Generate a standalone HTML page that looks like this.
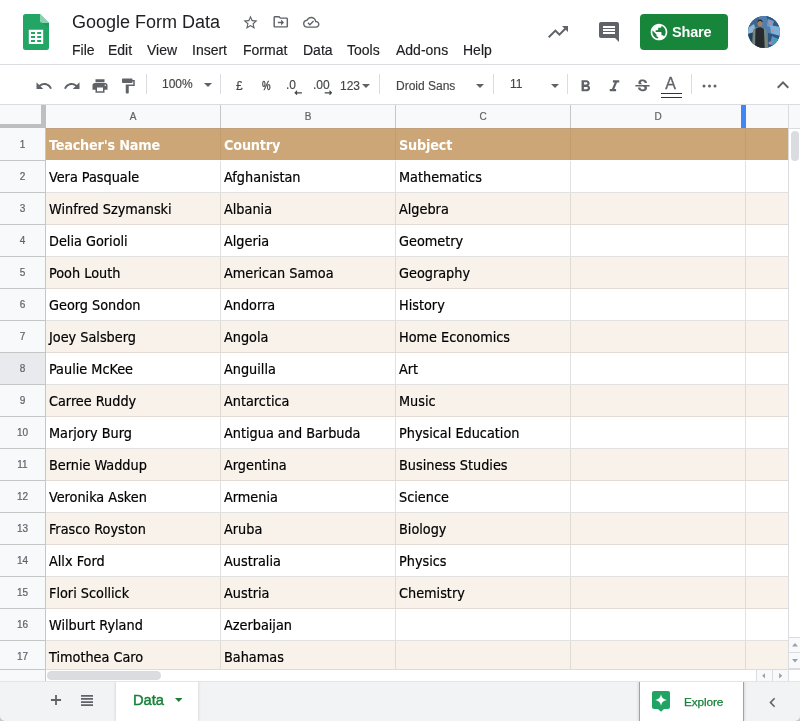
<!DOCTYPE html>
<html><head><meta charset="utf-8"><title>Google Form Data</title>
<style>
*{box-sizing:border-box;margin:0;padding:0}
html,body{width:800px;height:721px;overflow:hidden;background:#fff;font-family:"Liberation Sans",sans-serif;color:#202124}
svg{position:absolute;display:block}
#titlebar{will-change:transform;position:absolute;left:0;top:0;width:800px;height:65px;background:#fff;border-bottom:1px solid #dadce0}
#title{position:absolute;left:72px;top:10px;font-size:18px;color:#202124;white-space:nowrap;line-height:24px}
#menu{position:absolute;left:0;top:40px;height:20px;font-size:14px;line-height:20px;color:#202124;white-space:nowrap;-webkit-text-stroke:.150px #202124}
#menu span{position:absolute;top:0}
#share{position:absolute;left:640px;top:14px;width:88px;height:36px;border-radius:4px;background:#17853a}
#share b{position:absolute;left:32px;top:9px;font-size:14.5px;line-height:18px;color:#fff;font-weight:bold;letter-spacing:-.2px}
#avatar{position:absolute;left:748px;top:16px;width:32px;height:32px;border-radius:50%;overflow:hidden;background:#4f7faf}
#toolbar{will-change:transform;position:absolute;left:0;top:65px;width:800px;height:40px;background:#fff;border-bottom:1px solid #dadce0}
.tsep{position:absolute;top:9px;width:1px;height:20px;background:#dadce0}
.tt{position:absolute;font-size:12px;color:#444746;-webkit-text-stroke:.150px #444746;line-height:16px;white-space:nowrap}
.caret{position:absolute;width:0;height:0;border-left:4px solid transparent;border-right:4px solid transparent;border-top:4px solid #5f6368}
#grid{will-change:transform;position:absolute;left:0;top:105px;width:800px;height:576px;background:#fff;overflow:hidden}
#colhdr{position:absolute;left:0;top:0;width:789px;height:23px;background:#f8f9fa}
.ch{position:absolute;top:0;height:23px;border-right:1px solid #c4c7c5;font-size:10px;line-height:24px;text-align:center;color:#5f6368;-webkit-text-stroke:.200px #5f6368}
#corner{position:absolute;left:0;top:0;width:46px;height:24px;background:#f8f9fa}
#cornerv{position:absolute;left:41px;top:0;width:5px;height:24px;background:#bdbfc1}
#cornerh{position:absolute;left:0;top:19px;width:46px;height:5px;background:#bdbfc1}
#bluebar{position:absolute;left:741px;top:0;width:5px;height:24px;background:#4285f4}
.rh{position:absolute;left:0;width:46px;height:32px;background:#f8f9fa;border-right:1px solid #c4c7c5;border-bottom:1px solid #c4c7c5;font-size:10px;line-height:32px;text-align:center;color:#5f6368;-webkit-text-stroke:.200px #5f6368}
.row{position:absolute;left:46px;width:742px;height:32px;border-bottom:1px solid #e1e1e1}
.row.alt{background:#f8f2eb}
.row.hd{background:#cca677;color:#fff;font-weight:bold;border-bottom:none;border-top:1px solid #bfa07a}
.c{position:absolute;top:0;height:31px;border-right:1px solid #e1e1e1;font-family:"DejaVu Sans Condensed","DejaVu Sans","Liberation Sans",sans-serif;font-size:14.3px;line-height:31px;padding-top:1px;padding-left:3px;white-space:nowrap;overflow:hidden;color:#000;-webkit-text-stroke:.200px #000}
.row.hd .c{padding-top:1px;height:31px;color:#fff;-webkit-text-stroke:0;border-right-color:#c19c6e;letter-spacing:-.2px}
.row.alt .c{border-right-color:#e0dbd5}
.row.alt{border-bottom-color:#e0dbd5}
#bottombar{will-change:transform;position:absolute;left:0;top:681px;width:800px;height:40px;background:#f1f3f4;overflow:hidden}
#tab{position:absolute;left:116px;top:0;width:82px;height:40px;background:#fff;box-shadow:0 0 3px rgba(60,64,67,.220)}
#tab b{position:absolute;left:17px;top:10px;font-size:14.700px;line-height:18px;color:#188038;font-weight:normal;-webkit-text-stroke:.450px #188038}
#explore{position:absolute;left:639px;top:0;width:105px;height:40px;background:#fff;border-left:1px solid #a0a3a6;border-right:1px solid #a0a3a6;box-shadow:0 0 3px rgba(60,64,67,.250)}
#explore span{position:absolute;left:44px;top:13px;font-size:11.800px;line-height:16px;color:#188038;-webkit-text-stroke:.250px #188038;letter-spacing:-.100px}

</style></head><body>
<div id="titlebar">
<svg style="left:23px;top:14px" width="26" height="36" viewBox="0 0 26 36"><path d="M2.500 0H17l9 9v24.500a2.500 2.500 0 0 1-2.500 2.500h-21A2.500 2.500 0 0 1 0 33.500V2.500A2.500 2.500 0 0 1 2.500 0z" fill="#23a566"/><path d="M17 0l9 9h-6.500A2.500 2.500 0 0 1 17 6.500z" fill="#8ed1b1"/><path d="M18 8.500L26 14V9h-6.500z" fill="#1c8f58" opacity=".450"/><path d="M5.800 15.800h14.400v14.200H5.800zM8 18.100v1.900h4v-1.900zm6.200 0v1.900h4v-1.900zM8 22.100v2h4v-2zm6.200 0v2h4v-2zM8 26.100v1.900h4v-1.900zm6.200 0v1.900h4v-1.900z" fill="#fff" fill-rule="evenodd"/></svg>
<div id="title">Google Form Data</div>
<svg style="left:242.300px;top:14.100px" width="17" height="17" viewBox="0 0 24 24"><path fill="#5f6368" d="M22 9.240l-7.190-.620L12 2 9.190 8.630 2 9.240l5.460 4.730L5.820 21 12 17.270 18.180 21l-1.630-7.030L22 9.240zM12 15.400l-3.760 2.270 1-4.280-3.320-2.880 4.380-.380L12 6.100l1.710 4.040 4.380.380-3.320 2.880 1 4.280L12 15.400z"/></svg>
<svg style="left:271.500px;top:13.300px" width="17.500" height="17.500" viewBox="0 0 24 24"><path fill="#5f6368" d="M20 6h-8l-2-2H4c-1.100 0-2 .900-2 2v12c0 1.100.900 2 2 2h16c1.100 0 2-.900 2-2V8c0-1.100-.900-2-2-2zm0 12H4V6h5.170l2 2H20v10zm-7.500-1l4-4-4-4v3H8v2h4.500v3z"/></svg>
<svg style="left:303px;top:14.200px" width="16.500" height="16.500" viewBox="0 0 24 24"><path fill="#5f6368" d="M19.350 10.040C18.670 6.590 15.640 4 12 4 9.110 4 6.600 5.640 5.350 8.040 2.340 8.360 0 10.910 0 14c0 3.310 2.690 6 6 6h13c2.760 0 5-2.240 5-5 0-2.640-2.050-4.780-4.650-4.960zM19 18H6c-2.210 0-4-1.790-4-4 0-2.050 1.530-3.760 3.560-3.970l1.070-.110.500-.950C8.080 7.140 9.940 6 12 6c2.620 0 4.880 1.860 5.390 4.430l.300 1.500 1.530.110c1.560.100 2.780 1.410 2.780 2.960 0 1.650-1.350 3-3 3zm-9-3.820l-2.090-2.090L6.500 13.500 10 17l6.010-6.010-1.410-1.410z"/></svg>
<div id="menu"><span style="left:72px">File</span><span style="left:108px">Edit</span><span style="left:147px">View</span><span style="left:192px">Insert</span><span style="left:243px">Format</span><span style="left:303px">Data</span><span style="left:347px">Tools</span><span style="left:396px">Add-ons</span><span style="left:463px">Help</span></div>
<svg style="left:546px;top:20px" width="24" height="24" viewBox="0 0 24 24"><path fill="#5f6368" d="M16 6l2.290 2.290-4.880 4.880-4-4L2 16.590 3.410 18l6-6 4 4 6.300-6.290L22 12V6z"/></svg>
<svg style="left:597px;top:20px" width="24" height="24" viewBox="0 0 24 24"><path fill="#5f6368" d="M21.990 4c0-1.100-.890-2-1.990-2H4c-1.100 0-2 .900-2 2v12c0 1.100.900 2 2 2h14l4 4-.010-18zM18 14H6v-2h12v2zm0-3H6V9h12v2zm0-3H6V6h12v2z"/></svg>
<div id="share"><svg style="left:9px;top:8px" width="20" height="20" viewBox="0 0 24 24"><path fill="#fff" d="M12 2C6.480 2 2 6.480 2 12s4.480 10 10 10 10-4.480 10-10S17.520 2 12 2zm-1 17.930c-3.950-.490-7-3.850-7-7.930 0-.620.080-1.210.210-1.790L9 15v1c0 1.100.900 2 2 2v1.930zm6.900-2.540c-.260-.810-1-1.390-1.900-1.390h-1v-3c0-.550-.450-1-1-1H8v-2h2c.550 0 1-.450 1-1V7h2c1.100 0 2-.900 2-2v-.410c2.930 1.190 5 4.060 5 7.410 0 2.080-.800 3.970-2.100 5.390z"/></svg><b>Share</b></div>
<div id="avatar"><svg style="left:0;top:0" width="32" height="32" viewBox="0 0 32 32"><rect width="32" height="32" fill="#4f7faf"/><path d="M0 0h11v14L0 20z" fill="#3b6690"/><path d="M0 12l6-4 3 10-9 6z" fill="#8fb6d6"/><path d="M18 0h14v10l-8 3z" fill="#35597f"/><path d="M20 3l6 2-2 7-5-2z" fill="#6f9cc8"/><path d="M22 9l10 2v9l-9-3z" fill="#7fb0da"/><path d="M20 17l12 3v12H20z" fill="#2f5680"/><path d="M24 20l6 3-3 8-5-3z" fill="#5a93c4"/><circle cx="22" cy="7" r="1.500" fill="#c9859a"/><circle cx="25" cy="15" r="1.300" fill="#d08a8f"/><circle cx="22" cy="27" r="1.500" fill="#b9808f"/><circle cx="28" cy="24" r="2" fill="#3fa0b8"/><path d="M0 18l6-2v16H0z" fill="#27405e"/><path d="M5 14c1.500-2.500 4-3.500 6.500-3.500S16.500 12 18 14l2 18H4z" fill="#78857b"/><path d="M7.500 13c1.200-1.200 2.600-1.700 4.200-1.700s3 .5 4.200 1.700l.8 19H7z" fill="#272b30"/><ellipse cx="12" cy="7.600" rx="2.500" ry="3" fill="#a87d66"/><path d="M9.400 6.800c0-2.300 1.200-3.400 2.700-3.400s2.600 1.100 2.600 3.200c-.8-1.200-1.700-1.700-2.700-1.700s-1.800.600-2.600 1.900z" fill="#2a2420"/></svg></div>
</div>
<div id="toolbar">
<svg style="left:35px;top:11.700px" width="18" height="18" viewBox="0 0 24 24"><path fill="#5f6368" d="M12.500 8c-2.650 0-5.050.990-6.900 2.600L2 7v9h9l-3.620-3.620c1.390-1.160 3.160-1.880 5.120-1.880 3.540 0 6.550 2.310 7.600 5.500l2.370-.780C21.080 11.030 17.150 8 12.500 8z"/></svg>
<svg style="left:63px;top:11.700px" width="18" height="18" viewBox="0 0 24 24"><path fill="#5f6368" d="M18.400 10.600C16.550 8.990 14.150 8 11.500 8c-4.650 0-8.580 3.030-9.960 7.220L3.900 16c1.050-3.190 4.050-5.500 7.600-5.500 1.950 0 3.730.720 5.120 1.880L13 16h9V7l-3.600 3.600z"/></svg>
<svg style="left:91px;top:11.700px" width="18" height="18" viewBox="0 0 24 24"><path fill="#5f6368" d="M19 8H5c-1.660 0-3 1.340-3 3v6h4v4h12v-4h4v-6c0-1.660-1.340-3-3-3zm-3 11H8v-5h8v5zm3-7c-.550 0-1-.450-1-1s.450-1 1-1 1 .450 1 1-.450 1-1 1zm-1-9H6v4h12V3z"/></svg>
<svg style="left:119px;top:11.700px" width="18" height="18" viewBox="0 0 24 24"><path fill="#5f6368" d="M18 4V3c0-.550-.450-1-1-1H5c-.550 0-1 .450-1 1v4c0 .550.450 1 1 1h12c.550 0 1-.450 1-1V6h1v4H9v11c0 .550.450 1 1 1h2c.550 0 1-.450 1-1v-9h8V4h-3z"/></svg>
<div class="tsep" style="left:146px"></div>
<div class="tt" style="left:162px;top:11px">100%</div>
<div class="caret" style="left:204px;top:18px"></div>
<div class="tsep" style="left:220px"></div>
<div class="tt" style="left:236px;top:13px">£</div>
<div class="tt" style="left:262.300px;top:13px;transform:scaleX(.800);transform-origin:0 0;-webkit-text-stroke:.400px #444746">%</div>
<div class="tt" style="left:286px;top:12px">.0</div>
<svg style="left:293.700px;top:24.900px" width="8.600" height="5.600" viewBox="0 0 10 7"><path fill="#444746" d="M3.500 0v2.700H9.500v1.600H3.500V7L0 3.500z"/></svg>
<div class="tt" style="left:313px;top:12px">.00</div>
<svg style="left:323.700px;top:24.900px" width="8.600" height="5.600" viewBox="0 0 10 7"><path fill="#444746" d="M6.500 0v2.700H.5v1.600h6V7L10 3.500z"/></svg>
<div class="tt" style="left:340px;top:12.700px">123</div>
<div class="caret" style="left:362px;top:19px"></div>
<div class="tsep" style="left:379px"></div>
<div class="tt" style="left:396px;top:13px">Droid Sans</div>
<div class="caret" style="left:476px;top:19px"></div>
<div class="tsep" style="left:493px"></div>
<div class="tt" style="left:510px;top:11px">11</div>
<div class="caret" style="left:551px;top:19px"></div>
<div class="tsep" style="left:567px"></div>
<svg style="left:576px;top:11.700px" width="19" height="19" viewBox="0 0 24 24"><path fill="#5f6368" d="M15.600 10.790c.970-.670 1.650-1.770 1.650-2.790 0-2.260-1.750-4-4-4H7v14h7.040c2.090 0 3.710-1.700 3.710-3.790 0-1.520-.860-2.820-2.150-3.420zM10 6.500h3c.830 0 1.500.670 1.500 1.500s-.670 1.500-1.500 1.500h-3v-3zm3.500 9H10v-3h3.500c.830 0 1.500.670 1.500 1.500s-.670 1.500-1.500 1.500z"/></svg>
<svg style="left:605px;top:11.700px" width="19" height="19" viewBox="0 0 24 24"><path fill="#5f6368" d="M10 4v3h2.210l-3.420 8H6v3h8v-3h-2.210l3.420-8H18V4z"/></svg>
<svg style="left:633px;top:11.700px" width="19" height="19" viewBox="0 0 24 24"><path fill="#5f6368" d="M7.240 8.750c-.260-.480-.390-1.030-.390-1.670 0-.610.130-1.160.400-1.670.260-.500.630-.930 1.110-1.290.480-.350 1.050-.630 1.700-.830.660-.190 1.390-.290 2.180-.290.810 0 1.540.110 2.210.340.660.220 1.230.540 1.690.940.470.400.830.880 1.080 1.430.250.550.380 1.150.380 1.810h-3.010c0-.310-.050-.590-.150-.850-.090-.270-.240-.490-.440-.680-.200-.190-.450-.330-.750-.440-.300-.100-.660-.160-1.060-.160-.390 0-.740.040-1.030.130-.290.090-.530.210-.720.360-.190.160-.340.340-.440.550-.100.210-.150.430-.150.660 0 .480.250.880.740 1.210.380.250.770.480 1.410.700H7.390c-.050-.080-.110-.170-.150-.250zM21 12v-2H3v2h9.620c.180.070.400.140.550.200.370.170.660.340.870.510.210.170.350.360.430.570.070.200.110.430.110.690 0 .230-.050.450-.140.660-.090.200-.230.380-.420.530-.190.150-.420.260-.710.350-.290.080-.630.130-1.010.130-.430 0-.830-.040-1.180-.130s-.660-.230-.910-.420c-.250-.190-.450-.440-.590-.750-.140-.310-.250-.760-.250-1.210H6.400c0 .550.080 1.130.240 1.580.160.450.370.850.650 1.210.280.350.600.660.980.920.370.260.780.480 1.220.650.440.17.900.30 1.380.39.480.08.960.13 1.440.13.800 0 1.530-.090 2.180-.28s1.210-.450 1.670-.790c.460-.340.820-.770 1.070-1.270s.380-1.070.380-1.710c0-.600-.100-1.140-.310-1.610-.050-.110-.110-.230-.170-.330H21z"/></svg>
<div class="tt" style="left:665.300px;top:9.600px;font-size:16px;line-height:18px;color:#5f6368;-webkit-text-stroke:.300px #5f6368">A</div>
<div style="position:absolute;left:661px;top:28px;width:21px;height:5px;background:#fff;border-top:1.300px solid #333;border-bottom:1.300px solid #333"></div>
<div class="tsep" style="left:691px"></div>
<svg style="left:702px;top:19px" width="15" height="4" viewBox="0 0 15 4"><circle cx="2" cy="2" r="1.500" fill="#5f6368"/><circle cx="7.500" cy="2" r="1.500" fill="#5f6368"/><circle cx="13" cy="2" r="1.500" fill="#5f6368"/></svg>
<svg style="left:770.700px;top:8.300px" width="24" height="24" viewBox="0 0 24 24"><path fill="#5f6368" d="M12 8l-6 6 1.410 1.410L12 10.830l4.590 4.580L18 14z"/></svg>
</div>

<div id="grid">
<div id="colhdr">
<div class="ch" style="left:46px;width:175px">A</div>
<div class="ch" style="left:221px;width:175px">B</div>
<div class="ch" style="left:396px;width:175px">C</div>
<div class="ch" style="left:571px;width:175px">D</div>
<div class="ch" style="left:746px;width:43px"></div>
</div>
<div id="corner"></div><div id="cornerv"></div><div id="cornerh"></div><div id="bluebar"></div>
<div class="rh" style="top:23px;height:33px;line-height:34px">1</div>
<div class="row hd" style="top:23px">
<div class="c" style="left:0px;width:175px">Teacher's Name</div>
<div class="c" style="left:175px;width:175px">Country</div>
<div class="c" style="left:350px;width:175px">Subject</div>
<div class="c" style="left:525px;width:175px"></div><div class="c" style="left:700px;width:42px;border-right:none"></div>
</div>
<div class="rh" style="top:56px">2</div>
<div class="row" style="top:56px">
<div class="c" style="left:0px;width:175px">Vera Pasquale</div>
<div class="c" style="left:175px;width:175px">Afghanistan</div>
<div class="c" style="left:350px;width:175px">Mathematics</div>
<div class="c" style="left:525px;width:175px"></div><div class="c" style="left:700px;width:42px;border-right:none"></div>
</div>
<div class="rh" style="top:88px">3</div>
<div class="row alt" style="top:88px">
<div class="c" style="left:0px;width:175px">Winfred Szymanski</div>
<div class="c" style="left:175px;width:175px">Albania</div>
<div class="c" style="left:350px;width:175px">Algebra</div>
<div class="c" style="left:525px;width:175px"></div><div class="c" style="left:700px;width:42px;border-right:none"></div>
</div>
<div class="rh" style="top:120px">4</div>
<div class="row" style="top:120px">
<div class="c" style="left:0px;width:175px">Delia Gorioli</div>
<div class="c" style="left:175px;width:175px">Algeria</div>
<div class="c" style="left:350px;width:175px">Geometry</div>
<div class="c" style="left:525px;width:175px"></div><div class="c" style="left:700px;width:42px;border-right:none"></div>
</div>
<div class="rh" style="top:152px">5</div>
<div class="row alt" style="top:152px">
<div class="c" style="left:0px;width:175px">Pooh Louth</div>
<div class="c" style="left:175px;width:175px">American Samoa</div>
<div class="c" style="left:350px;width:175px">Geography</div>
<div class="c" style="left:525px;width:175px"></div><div class="c" style="left:700px;width:42px;border-right:none"></div>
</div>
<div class="rh" style="top:184px">6</div>
<div class="row" style="top:184px">
<div class="c" style="left:0px;width:175px">Georg Sondon</div>
<div class="c" style="left:175px;width:175px">Andorra</div>
<div class="c" style="left:350px;width:175px">History</div>
<div class="c" style="left:525px;width:175px"></div><div class="c" style="left:700px;width:42px;border-right:none"></div>
</div>
<div class="rh" style="top:216px">7</div>
<div class="row alt" style="top:216px">
<div class="c" style="left:0px;width:175px">Joey Salsberg</div>
<div class="c" style="left:175px;width:175px">Angola</div>
<div class="c" style="left:350px;width:175px">Home Economics</div>
<div class="c" style="left:525px;width:175px"></div><div class="c" style="left:700px;width:42px;border-right:none"></div>
</div>
<div class="rh" style="top:248px;background:#e8eaed">8</div>
<div class="row" style="top:248px">
<div class="c" style="left:0px;width:175px">Paulie McKee</div>
<div class="c" style="left:175px;width:175px">Anguilla</div>
<div class="c" style="left:350px;width:175px">Art</div>
<div class="c" style="left:525px;width:175px"></div><div class="c" style="left:700px;width:42px;border-right:none"></div>
</div>
<div class="rh" style="top:280px">9</div>
<div class="row alt" style="top:280px">
<div class="c" style="left:0px;width:175px">Carree Ruddy</div>
<div class="c" style="left:175px;width:175px">Antarctica</div>
<div class="c" style="left:350px;width:175px">Music</div>
<div class="c" style="left:525px;width:175px"></div><div class="c" style="left:700px;width:42px;border-right:none"></div>
</div>
<div class="rh" style="top:312px">10</div>
<div class="row" style="top:312px">
<div class="c" style="left:0px;width:175px">Marjory Burg</div>
<div class="c" style="left:175px;width:175px">Antigua and Barbuda</div>
<div class="c" style="left:350px;width:175px">Physical Education</div>
<div class="c" style="left:525px;width:175px"></div><div class="c" style="left:700px;width:42px;border-right:none"></div>
</div>
<div class="rh" style="top:344px">11</div>
<div class="row alt" style="top:344px">
<div class="c" style="left:0px;width:175px">Bernie Waddup</div>
<div class="c" style="left:175px;width:175px">Argentina</div>
<div class="c" style="left:350px;width:175px">Business Studies</div>
<div class="c" style="left:525px;width:175px"></div><div class="c" style="left:700px;width:42px;border-right:none"></div>
</div>
<div class="rh" style="top:376px">12</div>
<div class="row" style="top:376px">
<div class="c" style="left:0px;width:175px">Veronika Asken</div>
<div class="c" style="left:175px;width:175px">Armenia</div>
<div class="c" style="left:350px;width:175px">Science</div>
<div class="c" style="left:525px;width:175px"></div><div class="c" style="left:700px;width:42px;border-right:none"></div>
</div>
<div class="rh" style="top:408px">13</div>
<div class="row alt" style="top:408px">
<div class="c" style="left:0px;width:175px">Frasco Royston</div>
<div class="c" style="left:175px;width:175px">Aruba</div>
<div class="c" style="left:350px;width:175px">Biology</div>
<div class="c" style="left:525px;width:175px"></div><div class="c" style="left:700px;width:42px;border-right:none"></div>
</div>
<div class="rh" style="top:440px">14</div>
<div class="row" style="top:440px">
<div class="c" style="left:0px;width:175px">Allx Ford</div>
<div class="c" style="left:175px;width:175px">Australia</div>
<div class="c" style="left:350px;width:175px">Physics</div>
<div class="c" style="left:525px;width:175px"></div><div class="c" style="left:700px;width:42px;border-right:none"></div>
</div>
<div class="rh" style="top:472px">15</div>
<div class="row alt" style="top:472px">
<div class="c" style="left:0px;width:175px">Flori Scollick</div>
<div class="c" style="left:175px;width:175px">Austria</div>
<div class="c" style="left:350px;width:175px">Chemistry</div>
<div class="c" style="left:525px;width:175px"></div><div class="c" style="left:700px;width:42px;border-right:none"></div>
</div>
<div class="rh" style="top:504px">16</div>
<div class="row" style="top:504px">
<div class="c" style="left:0px;width:175px">Wilburt Ryland</div>
<div class="c" style="left:175px;width:175px">Azerbaijan</div>
<div class="c" style="left:350px;width:175px"></div>
<div class="c" style="left:525px;width:175px"></div><div class="c" style="left:700px;width:42px;border-right:none"></div>
</div>
<div class="rh" style="top:536px">17</div>
<div class="row alt" style="top:536px">
<div class="c" style="left:0px;width:175px">Timothea Caro</div>
<div class="c" style="left:175px;width:175px">Bahamas</div>
<div class="c" style="left:350px;width:175px"></div>
<div class="c" style="left:525px;width:175px"></div><div class="c" style="left:700px;width:42px;border-right:none"></div>
</div>
<div style="position:absolute;left:788px;top:0;width:12px;height:24px;background:#f8f9fa;border-left:1px solid #dadce0;border-bottom:1px solid #dadce0"></div>
<div style="position:absolute;left:788px;top:24px;width:12px;height:540px;background:#fff;border-left:1px solid #dadce0"></div>
<div style="position:absolute;left:790.500px;top:26px;width:8px;height:30px;border-radius:4px;background:#dadce0"></div>
<div style="position:absolute;left:788px;top:532px;width:12px;height:16px;background:#f8f9fa;border:1px solid #dadce0;border-right:none"></div>
<div style="position:absolute;left:788px;top:548px;width:12px;height:16px;background:#f8f9fa;border:1px solid #dadce0;border-right:none;border-top:none"></div>
<svg style="left:791.700px;top:538.200px" width="6" height="3.400" viewBox="0 0 7 4"><path d="M0 4L3.500 0 7 4z" fill="#9aa0a6"/></svg>
<svg style="left:791.700px;top:554.200px" width="6" height="3.400" viewBox="0 0 7 4"><path d="M0 0L3.500 4 7 0z" fill="#9aa0a6"/></svg>
<div style="position:absolute;left:0;top:564px;width:800px;height:12px;background:#fff;border-top:1px solid #dadce0"></div>
<div style="position:absolute;left:0;top:564px;width:46px;height:12px;background:#f8f9fa;border-right:1px solid #c4c7c5;border-top:1px solid #c4c7c5"></div>
<div style="position:absolute;left:47px;top:566.200px;width:114px;height:8.500px;border-radius:4.250px;background:#dadce0"></div>
<div style="position:absolute;left:756px;top:564px;width:17px;height:12px;background:#f8f9fa;border:1px solid #dadce0;border-bottom:none"></div>
<div style="position:absolute;left:772px;top:564px;width:17px;height:12px;background:#f8f9fa;border:1px solid #dadce0;border-bottom:none"></div>
<svg style="left:762px;top:567.800px" width="3.400" height="5.600" viewBox="0 0 4 7"><path d="M4 0L0 3.500 4 7z" fill="#9aa0a6"/></svg>
<svg style="left:779px;top:567.800px" width="3.400" height="5.600" viewBox="0 0 4 7"><path d="M0 0L4 3.500 0 7z" fill="#9aa0a6"/></svg>

</div>
<div id="bottombar">
<div style="position:absolute;left:0;top:0;width:800px;height:1px;background:#e4e5e6;z-index:3"></div>
<svg style="left:51px;top:13.800px" width="10" height="10" viewBox="0 0 10 10"><path fill="#5f6368" d="M4.100 0h1.800v4.100H10v1.800H5.900V10H4.100V5.900H0V4.100h4.100z"/></svg>
<svg style="left:81px;top:14px" width="12" height="11" viewBox="0 0 12 11"><path fill="#5f6368" d="M0 0h12v1.700H0zM0 3.100h12v1.700H0zM0 6.200h12v1.700H0zM0 9.300h12v1.700H0z"/></svg>
<div id="tab"><b>Data</b><svg style="left:58.700px;top:17.300px" width="7.500" height="3.900" viewBox="0 0 7.500 3.900"><path d="M0 0h7.500L3.750 3.900z" fill="#188038"/></svg></div>
<div id="explore"><svg style="left:12px;top:10px" width="20" height="22" viewBox="0 0 20 22"><path d="M2 0h14a2 2 0 0 1 2 2v14a2 2 0 0 1-2 2h-4L9 20.800 6 18H2a2 2 0 0 1-2-2V2a2 2 0 0 1 2-2z" fill="#1fa463"/><path d="M9 3.200c.500 3.300 2.400 5.200 5.800 5.700-3.400.500-5.300 2.400-5.800 5.800-.500-3.400-2.400-5.300-5.800-5.800 3.400-.500 5.300-2.400 5.800-5.700z" fill="#fff"/></svg><span>Explore</span></div>
<svg style="left:762.500px;top:12.100px" width="19" height="19" viewBox="0 0 24 24"><path fill="#5f6368" d="M15.410 7.410L14 6l-6 6 6 6 1.410-1.410L10.830 12z"/></svg>
<svg style="left:0;top:35px" width="5" height="5" viewBox="0 0 5 5"><path d="M0 0A5 5 0 0 0 5 5H0z" fill="#c4c6c8"/></svg>
<svg style="left:795px;top:35px" width="5" height="5" viewBox="0 0 5 5"><path d="M5 0A5 5 0 0 1 0 5H5z" fill="#c4c6c8"/></svg>
</div>

</body></html>
